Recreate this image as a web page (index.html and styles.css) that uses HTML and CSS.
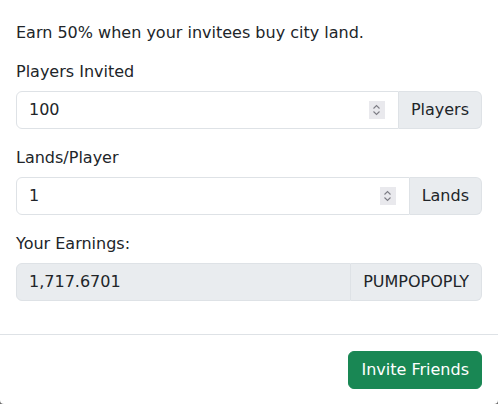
FILE: index.html
```html
<!DOCTYPE html>
<html>
<head>
<meta charset="utf-8">
<link rel="stylesheet" href="styles.css">
</head>
<body>
<div class="modal">
  <div class="modal-body">
    <p class="intro">Earn 50% when your invitees buy city land.</p>
    <div class="group">
      <label class="label">Players Invited</label>
      <div class="input-group">
        <div class="control">
          <span class="value">100</span>
          <span class="spin"><svg width="9" height="12" viewBox="0 0 9 12"><path d="M1.5 4.5 L4.5 1.5 L7.5 4.5" fill="none" stroke="#7d7d85" stroke-width="1.1"/><path d="M1.5 7.5 L4.5 10.5 L7.5 7.5" fill="none" stroke="#7d7d85" stroke-width="1.1"/></svg></span>
        </div>
        <span class="addon">Players</span>
      </div>
    </div>
    <div class="group">
      <label class="label">Lands/Player</label>
      <div class="input-group">
        <div class="control">
          <span class="value">1</span>
          <span class="spin"><svg width="9" height="12" viewBox="0 0 9 12"><path d="M1.5 4.5 L4.5 1.5 L7.5 4.5" fill="none" stroke="#7d7d85" stroke-width="1.1"/><path d="M1.5 7.5 L4.5 10.5 L7.5 7.5" fill="none" stroke="#7d7d85" stroke-width="1.1"/></svg></span>
        </div>
        <span class="addon">Lands</span>
      </div>
    </div>
    <div class="group">
      <label class="label">Your Earnings:</label>
      <div class="input-group">
        <div class="control disabled">
          <span class="value">1,717.6701</span>
        </div>
        <span class="addon">PUMPOPOPLY</span>
      </div>
    </div>
  </div>
  <div class="modal-footer">
    <button class="btn">Invite Friends</button>
  </div>
</div>
</body>
</html>
```

FILE: styles.css
```css
* { box-sizing: border-box; }
html, body { margin: 0; padding: 0; }
body {
  background: #6c6c6c;
  font-family: "DejaVu Sans", sans-serif;
  font-size: 16px;
  line-height: 1.5;
  color: #212529;
  width: 498px;
  height: 404px;
  overflow: hidden;
}
.modal {
  background: #fff;
  width: 498px;
  height: 404px;
  border-radius: 0 0 4px 4px;
}
.modal-body {
  padding: 21px 16px 17px;
}
.intro { margin: 0 0 14px; }
.group { margin-bottom: 16px; }
.label { display: block; padding-top: 1px; margin-bottom: 7px; }
.input-group { display: flex; height: 38px; }
.control {
  flex: 1;
  display: flex;
  align-items: center;
  border: 1px solid #dee2e6;
  border-radius: 6px 0 0 6px;
  padding: 0 13px 0 12px;
  background: #fff;
}
.control.disabled { background: #e9ecef; }
.value { flex: 1; }
.spin {
  width: 16px;
  height: 18px;
  background: #e9e9ed;
  display: flex;
  align-items: center;
  justify-content: center;
}
.addon {
  display: flex;
  align-items: center;
  padding: 0 12px;
  background: #e9ecef;
  border: 1px solid #dee2e6;
  border-left: 0;
  border-radius: 0 6px 6px 0;
}
.modal-footer {
  border-top: 1px solid #dee2e6;
  padding: 16px 16px;
  display: flex;
  justify-content: flex-end;
}
.btn {
  font-family: inherit;
  font-size: 16px;
  line-height: 1.5;
  color: #fff;
  background: #198754;
  border: 1px solid #198754;
  border-radius: 6px;
  padding: 6px 12px;
}
```
